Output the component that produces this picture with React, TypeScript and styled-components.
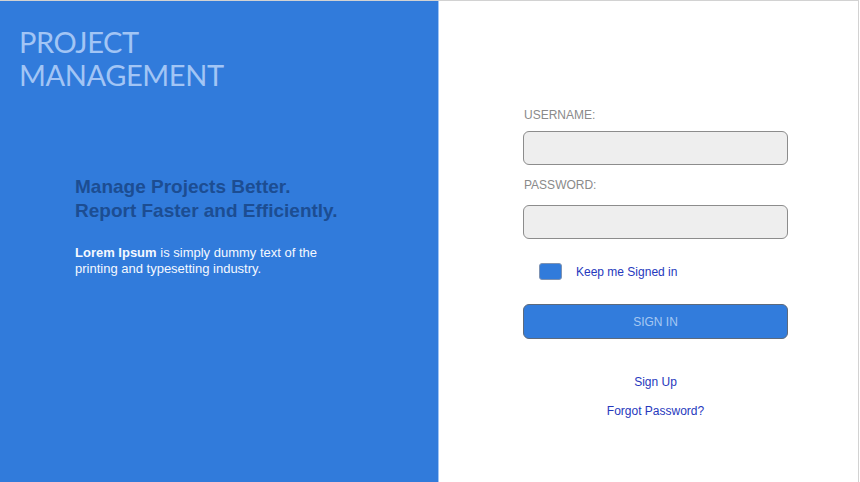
import React from "react";
import styled, { createGlobalStyle } from "styled-components";

const GlobalStyle = createGlobalStyle`
  html, body { margin: 0; padding: 0; background: #ffffff; }
  body { font-family: "Liberation Sans", Arial, sans-serif; }
  * { box-sizing: border-box; }
`;

const Frame = styled.div`
  width: 859px;
  height: 482px;
  display: flex;
  border-top: 1px solid #d2d2d2;
  border-right: 1px solid #d2d2d2;
  background: #ffffff;
`;

const Brand = styled.section`
  width: 439px;
  flex-shrink: 0;
  background: #317bdb;
  border-right: 1px solid #9fc5f6;
  padding: 24px 0 0 19px;
  display: flex;
  flex-direction: column;
`;

const Title = styled.h1`
  margin: 0;
  font-family: Lato, "Open Sans", sans-serif;
  font-weight: 400;
  font-size: 29px;
  line-height: 33px;
  color: #a2c5f5;
  letter-spacing: -0.4px;
`;

const Pitch = styled.div`
  margin: 84px 0 0 56px;
  display: flex;
  flex-direction: column;
  gap: 22px;
`;

const Tagline = styled.h2`
  margin: 0;
  font-family: "Liberation Sans", Arial, sans-serif;
  font-weight: 700;
  font-size: 19px;
  line-height: 24px;
  color: #1c4d92;
`;

const Blurb = styled.p`
  margin: 0;
  font-family: "Liberation Sans", Arial, sans-serif;
  font-size: 13px;
  line-height: 16px;
  color: #f4f8ff;
  b { font-weight: 700; }
`;

const LoginPane = styled.section`
  flex: 1;
  padding: 107px 0 0 84px;
`;

const Form = styled.form`
  width: 265px;
  display: flex;
  flex-direction: column;
`;

const Label = styled.label<{ $gap: number }>`
  font-size: 12px;
  line-height: 14px;
  color: #8a8a8a;
  margin-bottom: ${(p) => p.$gap}px;
  padding-left: 1px;
`;

const TextInput = styled.input`
  height: 34px;
  width: 100%;
  border: 1px solid #8c8c8c;
  border-radius: 6px;
  background: #eeeeee;
  margin: 0 0 13px 0;
  padding: 0 10px;
  font-family: inherit;
  font-size: 13px;
  outline: none;
`;

const RememberRow = styled.label`
  display: flex;
  align-items: center;
  gap: 14px;
  margin: 11px 0 0 16px;
  height: 17px;
  cursor: pointer;
`;

const CheckBox = styled.input`
  appearance: none;
  -webkit-appearance: none;
  margin: 0;
  width: 23px;
  height: 17px;
  border-radius: 3px;
  border: 1px solid #7e93b3;
  background: #317bdb;
`;

const RememberText = styled.span`
  font-size: 12px;
  line-height: 14px;
  color: #2638bd;
`;

const SignInButton = styled.button`
  margin-top: 24px;
  height: 35px;
  width: 100%;
  border: 1px solid #5d6a7c;
  border-radius: 6px;
  background: #327cdc;
  color: #a6c8f3;
  font-family: "Liberation Sans", Arial, sans-serif;
  font-size: 12px;
  cursor: pointer;
`;

const Links = styled.div`
  margin-top: 36px;
  display: flex;
  flex-direction: column;
  align-items: center;
  gap: 15px;
`;

const TextLink = styled.a`
  font-size: 12px;
  line-height: 14px;
  color: #2638bd;
  text-decoration: none;
  cursor: pointer;
`;

export default function App() {
  return (
    <>
      <GlobalStyle />
      <Frame>
        <Brand>
          <Title>
            PROJECT
            <br />
            MANAGEMENT
          </Title>
          <Pitch>
            <Tagline>
              Manage Projects Better.
              <br />
              Report Faster and Efficiently.
            </Tagline>
            <Blurb>
              <b>Lorem Ipsum</b> is simply dummy text of the
              <br />
              printing and typesetting industry.
            </Blurb>
          </Pitch>
        </Brand>
        <LoginPane>
          <Form onSubmit={(e) => e.preventDefault()}>
            <Label htmlFor="username" $gap={9}>USERNAME:</Label>
            <TextInput id="username" type="text" />
            <Label htmlFor="password" $gap={13}>PASSWORD:</Label>
            <TextInput id="password" type="password" />
            <RememberRow>
              <CheckBox type="checkbox" />
              <RememberText>Keep me Signed in</RememberText>
            </RememberRow>
            <SignInButton type="submit">SIGN IN</SignInButton>
            <Links>
              <TextLink>Sign Up</TextLink>
              <TextLink>Forgot Password?</TextLink>
            </Links>
          </Form>
        </LoginPane>
      </Frame>
    </>
  );
}
